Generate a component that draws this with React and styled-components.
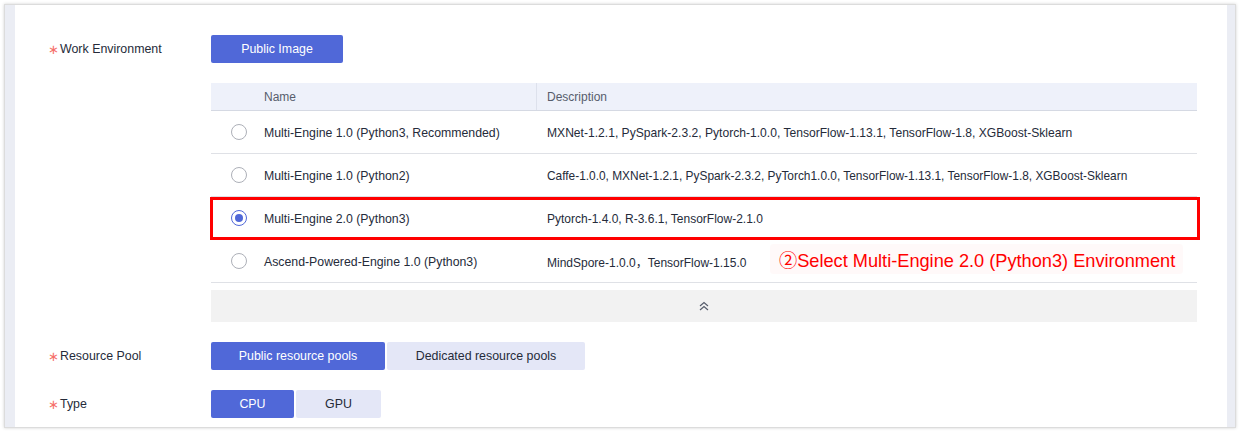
import React from "react";
import styled, { createGlobalStyle } from "styled-components";

const Global = createGlobalStyle`
  html, body { margin: 0; padding: 0; background: #ffffff; }
  body { font-family: "Liberation Sans", Arial, "Noto Sans CJK SC", sans-serif; }
  * { box-sizing: border-box; }
`;

const Frame = styled.div`
  margin: 4px;
  height: 424px;
  border: 1px solid #dcdcdc;
  box-shadow: 0 0 3px rgba(0, 0, 0, 0.18);
  display: flex;
  overflow: hidden;
`;

const SideStrip = styled.div`
  width: ${(p) => p.$w}px;
  flex: none;
  background: #ebedf4;
`;

const Content = styled.div`
  flex: 1;
  background: #ffffff;
  padding: 30px 30px 0 33px;
  display: flex;
  flex-direction: column;
  gap: 20px;
`;

const FormItem = styled.div`
  display: flex;
  align-items: flex-start;
`;

const Label = styled.div`
  width: 163px;
  flex: none;
  height: 28px;
  display: flex;
  align-items: center;
  font-size: 12.4px;
  color: #252b3a;
`;

const Star = styled.span`
  color: #f66f6a;
  font-family: "DejaVu Sans", sans-serif;
  font-size: 13px;
  width: 12px;
  display: inline-flex;
  align-items: center;
`;

const Control = styled.div`
  flex: 1;
  display: flex;
  flex-direction: column;
  gap: 20px;
`;

const ButtonGroup = styled.div`
  display: flex;
  gap: 2px;
`;

const SegButton = styled.div`
  height: 28px;
  width: ${(p) => p.$w}px;
  display: flex;
  align-items: center;
  justify-content: center;
  font-size: 12.4px;
  border-radius: 2px;
  background: ${(p) => (p.$active ? "#5068d8" : "#e4e7f7")};
  color: ${(p) => (p.$active ? "#ffffff" : "#252b3a")};
`;

const TableWrap = styled.div`
  position: relative;
  width: 986px;
`;

const HeaderRow = styled.div`
  display: grid;
  grid-template-columns: 42px 283px 1fr;
  height: 28px;
  background: #eef1fa;
  border-bottom: 1px solid #d5d9e3;
  font-size: 12px;
  color: #575d6c;
`;

const HeadCell = styled.div`
  display: flex;
  align-items: center;
  border-left: ${(p) => (p.$divider ? "1px solid #dde1ec" : "none")};
  padding-left: ${(p) => (p.$divider ? "10px" : "11px")};
`;

const Row = styled.div`
  display: grid;
  grid-template-columns: 42px 283px 1fr;
  height: 43px;
  border-bottom: 1px solid #dfe1e6;
  font-size: 12px;
  color: #252b3a;
`;

const Cell = styled.div`
  display: flex;
  align-items: center;
  padding-left: 11px;
  padding-top: 1px;
  white-space: nowrap;
  font-size: ${(p) => p.$size || 12}px;
`;

const RadioCell = styled.div`
  display: flex;
  align-items: center;
  padding-left: 20px;
`;

const Radio = styled.span`
  width: 16px;
  height: 16px;
  border-radius: 50%;
  border: 1px solid ${(p) => (p.$checked ? "#5068d8" : "#adb0b8")};
  display: flex;
  align-items: center;
  justify-content: center;
  background: #fff;
  &::after {
    content: "";
    width: 8px;
    height: 8px;
    border-radius: 50%;
    background: ${(p) => (p.$checked ? "#5068d8" : "transparent")};
  }
`;

const ExpandBar = styled.div`
  margin-top: 7px;
  height: 32px;
  background: #f2f2f2;
  display: flex;
  align-items: center;
  justify-content: center;
`;

const Highlight = styled.div`
  position: absolute;
  left: -1px;
  top: 114px;
  width: 990px;
  height: 43px;
  border: 3px solid #ff0000;
  pointer-events: none;
`;

const Note = styled.div`
  position: absolute;
  left: 559px;
  top: 161px;
  height: 30px;
  padding: 0 8px 0 9px;
  display: flex;
  align-items: center;
  background: rgba(255, 0, 0, 0.025);
  border-radius: 3px;
  color: #ff0000;
  font-size: 18.2px;
  white-space: nowrap;
`;

const rows = [
  {
    name: "Multi-Engine 1.0 (Python3, Recommended)",
    desc: "MXNet-1.2.1, PySpark-2.3.2, Pytorch-1.0.0, TensorFlow-1.13.1, TensorFlow-1.8, XGBoost-Sklearn",
    size: 12.1,
  },
  {
    name: "Multi-Engine 1.0 (Python2)",
    desc: "Caffe-1.0.0, MXNet-1.2.1, PySpark-2.3.2, PyTorch1.0.0, TensorFlow-1.13.1, TensorFlow-1.8, XGBoost-Sklearn",
    size: 11.9,
  },
  {
    name: "Multi-Engine 2.0 (Python3)",
    desc: "Pytorch-1.4.0, R-3.6.1, TensorFlow-2.1.0",
    checked: true,
    size: 12,
  },
  {
    name: "Ascend-Powered-Engine 1.0 (Python3)",
    desc: "MindSpore-1.0.0，TensorFlow-1.15.0",
    size: 12,
  },
];

const ChevronsUp = () => (
  <svg width="10" height="10" viewBox="0 0 10 10" fill="none">
    <path d="M1 5 L5 1.5 L9 5" stroke="#575d6c" strokeWidth="1.2" />
    <path d="M1 9 L5 5.5 L9 9" stroke="#575d6c" strokeWidth="1.2" />
  </svg>
);

export default function App() {
  return (
    <>
      <Global />
      <Frame>
        <SideStrip $w={10} />
        <Content>
          <FormItem>
            <Label>
              <Star>∗</Star>Work Environment
            </Label>
            <Control>
              <ButtonGroup>
                <SegButton $active $w={132}>Public Image</SegButton>
              </ButtonGroup>
              <TableWrap>
                <HeaderRow>
                  <HeadCell />
                  <HeadCell>Name</HeadCell>
                  <HeadCell $divider>Description</HeadCell>
                </HeaderRow>
                {rows.map((r) => (
                  <Row key={r.name}>
                    <RadioCell>
                      <Radio $checked={r.checked} />
                    </RadioCell>
                    <Cell $size={12.3}>{r.name}</Cell>
                    <Cell $size={r.size}>{r.desc}</Cell>
                  </Row>
                ))}
                <ExpandBar>
                  <ChevronsUp />
                </ExpandBar>
                <Highlight />
                <Note>②Select Multi-Engine 2.0 (Python3) Environment</Note>
              </TableWrap>
            </Control>
          </FormItem>
          <FormItem>
            <Label>
              <Star>∗</Star>Resource Pool
            </Label>
            <ButtonGroup>
              <SegButton $active $w={174}>Public resource pools</SegButton>
              <SegButton $w={198}>Dedicated resource pools</SegButton>
            </ButtonGroup>
          </FormItem>
          <FormItem>
            <Label>
              <Star>∗</Star>Type
            </Label>
            <ButtonGroup>
              <SegButton $active $w={83}>CPU</SegButton>
              <SegButton $w={85}>GPU</SegButton>
            </ButtonGroup>
          </FormItem>
        </Content>
        <SideStrip $w={8} />
      </Frame>
    </>
  );
}
